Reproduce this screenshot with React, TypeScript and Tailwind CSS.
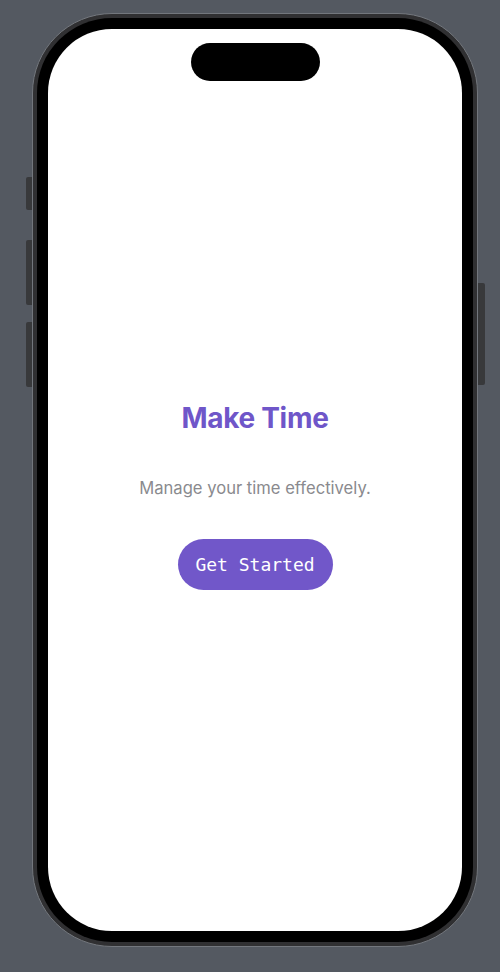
export default function App() {
  return (
    <div className="min-h-[972px] bg-[#545961] pt-[13px] pl-[32px] font-['Inter',sans-serif]">
      <div className="relative w-[446px] h-[934px]">
        {/* side buttons */}
        <div className="absolute left-[-6px] top-[164px] w-[6px] h-[33px] rounded-l-[2px] bg-[#38393b]" />
        <div className="absolute left-[-6px] top-[227px] w-[6px] h-[65px] rounded-l-[2px] bg-[#38393b]" />
        <div className="absolute left-[-6px] top-[309px] w-[6px] h-[65px] rounded-l-[2px] bg-[#38393b]" />
        <div className="absolute right-[-7px] top-[270px] w-[7px] h-[102px] rounded-r-[2px] bg-[#38393b]" />

        <div className="h-full rounded-[80px] border border-[#73777d] bg-[#303032] p-[4px]">
          <div className="h-full rounded-[75px] bg-black p-[11px]">
            <div className="h-full rounded-[64px] bg-white flex flex-col items-center pt-[14px]">
              <div className="w-[129px] h-[38px] rounded-full bg-black" />

              <div className="flex flex-col items-center mt-[320px]">
                <h1 className="text-[28px] leading-[34px] font-bold tracking-[-0.3px] text-[#6f56c9]">
                  Make Time
                </h1>
                <p className="mt-[42px] text-[16.6px] leading-[22px] text-[#8a8a8e]">
                  Manage your time effectively.
                </p>
                <button className="mt-[40px] w-[155px] h-[51px] rounded-full bg-[#7157c9] text-white text-[18px] font-['DejaVu_Sans_Mono',monospace]">
                  Get Started
                </button>
              </div>
            </div>
          </div>
        </div>
      </div>
    </div>
  );
}
